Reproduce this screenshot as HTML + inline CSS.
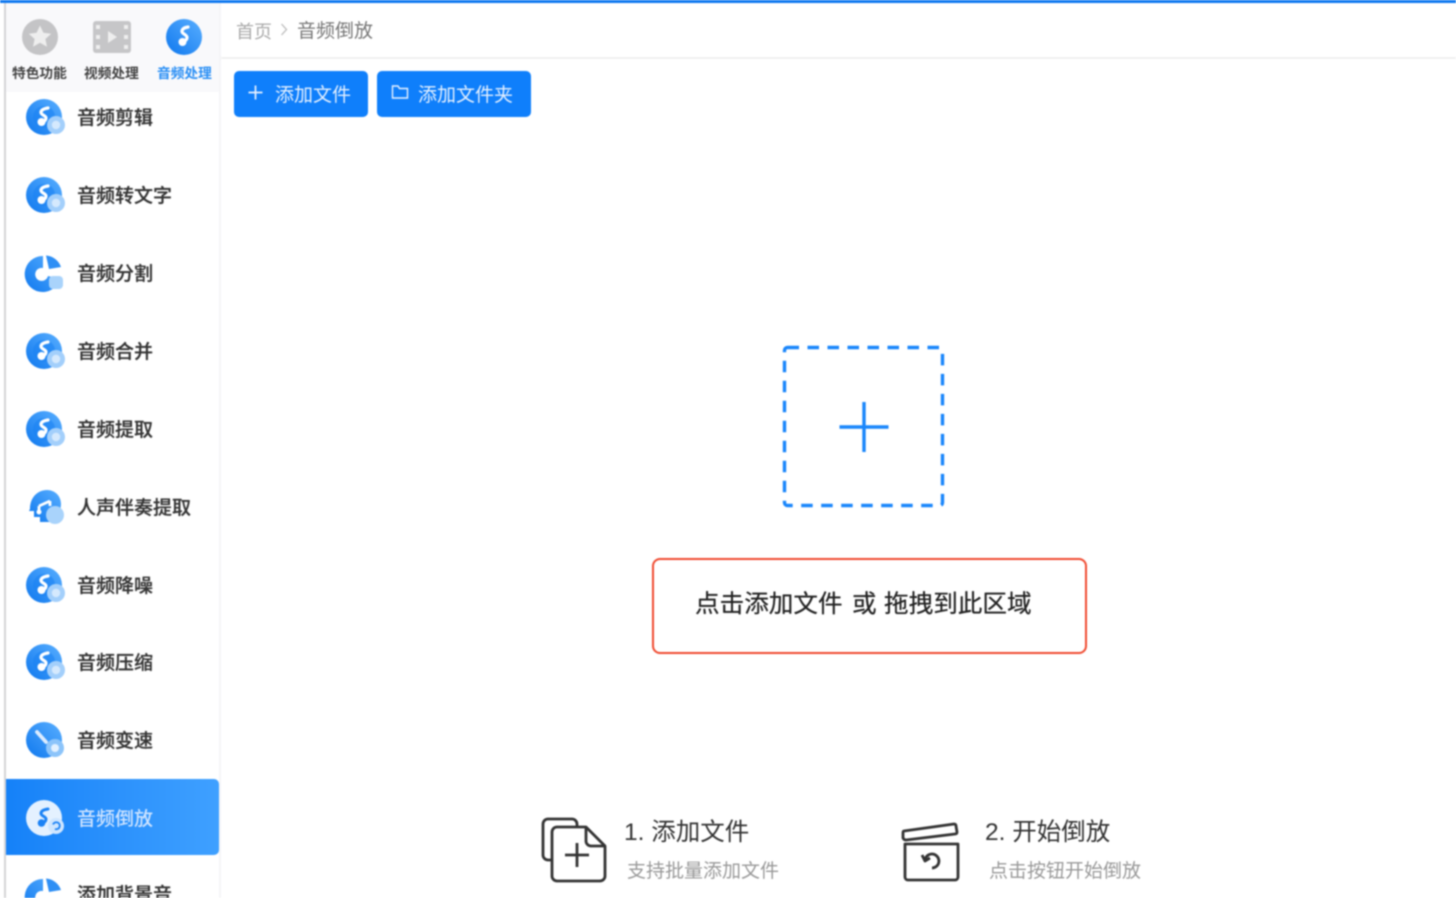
<!DOCTYPE html>
<html lang="zh">
<head>
<meta charset="utf-8">
<title>音频倒放</title>
<style>
html,body{margin:0;padding:0;background:#fff}
body{width:1456px;height:898px;overflow:hidden;position:relative;font-family:"Liberation Sans","Noto Sans CJK SC",sans-serif;color:#333}
#wrap{position:absolute;left:0;top:0;width:1456px;height:898px;overflow:hidden;filter:blur(.75px)}
.a{position:absolute;white-space:nowrap}
.tl{font-size:13.7px;font-weight:700;line-height:16px;top:66px;color:#444}
.it{position:absolute;left:77px;font-size:19px;line-height:24px;color:#333;font-weight:500;white-space:nowrap;text-shadow:0 0 .6px #333}
.ic{position:absolute;left:24px;width:42px;height:42px}
.btn{position:absolute;top:71px;height:46px;background:#0f7ffb;border-radius:5px;color:#e8f2ff}
.rt{top:590px;font-size:24.600px;line-height:30px;color:#222;text-shadow:0 0 .5px #222}
</style>
</head>
<body>
<div id="wrap">
<svg width="0" height="0" style="position:absolute">
<defs>
<linearGradient id="g" x1="0" y1="1" x2="1" y2="0"><stop offset="0" stop-color="#0f78ee"/><stop offset="1" stop-color="#58aeff"/></linearGradient>
<symbol id="note" viewBox="0 0 42 42">
<circle cx="20" cy="20" r="18" fill="url(#g)"/>
<circle cx="20" cy="20" r="11" fill="#1a82f2" opacity=".55"/>
<path d="M24 11c-4 .6-7 2-7 4.500 0 2.500 5 3 5 5.500 0 2-1.500 3.500-3 3.500" fill="none" stroke="#fff" stroke-width="3.200" stroke-linecap="round"/>
<circle cx="17.500" cy="25" r="4" fill="#fff"/>
<circle cx="32" cy="28" r="9" fill="#a3cffb"/>
<circle cx="32" cy="28" r="4.200" fill="#d5e9fd"/>
</symbol>
<symbol id="split" viewBox="0 0 42 42">
<path d="M19 3A18 18 0 1 0 36 26L24 23A6.500 6.500 0 1 1 19 15Z" fill="url(#g)"/>
<path d="M22 2.500A17 17 0 0 1 37 14L25 16Z" fill="#2e8ff5"/>
<rect x="25" y="23" width="14" height="13" rx="4" fill="#a9d3fb"/>
</symbol>
<symbol id="voice" viewBox="0 0 42 42">
<path d="M6 22C6 10 14 3 23 3c8 0 14 6 14 14 0 6-3 11-8 13v5H16v-5H10v-6H5Z" fill="url(#g)"/>
<path d="M15 19l11-5M15 19v5M26 14v5" stroke="#fff" stroke-width="2.800" fill="none"/>
<circle cx="15" cy="25" r="2.500" fill="#fff"/>
<circle cx="31" cy="28" r="9" fill="#a9d3fb"/>
</symbol>
<symbol id="speed" viewBox="0 0 42 42">
<circle cx="20" cy="20" r="18" fill="url(#g)"/>
<path d="M13 12l9 10" stroke="#dcecff" stroke-width="3.800" stroke-linecap="round"/>
<circle cx="31" cy="28" r="9" fill="#8cc4fa"/>
<circle cx="31" cy="28" r="4" fill="#e3f1ff"/>
</symbol>
</defs>
</svg>

<!-- top strip and sidebar -->
<div class="a" style="left:0;top:0;width:1456px;height:3px;background:#0f78f0;z-index:5"></div>
<div class="a" style="left:4px;top:0;width:2px;height:898px;background:#d4d4d6"></div>
<div class="a" style="left:6px;top:3px;width:213px;height:89px;background:#f9f9fb"></div>
<div class="a" style="left:219px;top:3px;width:2px;height:895px;background:#f5f5f7"></div>
<div class="a" style="left:221px;top:57px;width:1235px;height:2px;background:#f1f1f1"></div>

<!-- tabs -->
<svg class="a" style="left:20px;top:17px" width="40" height="40" viewBox="0 0 40 40"><circle cx="20" cy="20" r="18" fill="#c4c4c6"/><path d="M20 8.500l3.400 7.300 7.800.9-5.800 5.300 1.600 7.800-7-4-7 4 1.600-7.800-5.800-5.300 7.800-.9z" fill="#eeeeee"/></svg>
<svg class="a" style="left:92px;top:20px" width="40" height="34" viewBox="0 0 40 34"><rect x="1" y="1" width="38" height="32" rx="3" fill="#c6c6c8"/><path d="M16 11l9 6-9 6z" fill="#eee"/><g fill="#eee"><rect x="4" y="5" width="4" height="4"/><rect x="4" y="15" width="4" height="4"/><rect x="4" y="25" width="4" height="4"/><rect x="32" y="5" width="4" height="4"/><rect x="32" y="15" width="4" height="4"/><rect x="32" y="25" width="4" height="4"/></g></svg>
<svg class="a" style="left:165px;top:18px" width="38" height="38" viewBox="0 0 38 38"><circle cx="19" cy="19" r="18" fill="url(#g)"/><path d="M23 9c-4 .6-6 2-6 4.500 0 2.500 5 3 5 6 0 2-1.500 3.500-3.500 3.500" fill="none" stroke="#fff" stroke-width="3.200" stroke-linecap="round"/><circle cx="17.500" cy="24" r="4" fill="#fff"/></svg>
<div class="a tl" style="left:12px">特色功能</div>
<div class="a tl" style="left:84px">视频处理</div>
<div class="a tl" style="left:157px;color:#2c90f5">音频处理</div>

<!-- active item -->
<div class="a" style="left:6px;top:779px;width:213px;height:76px;border-radius:0 5px 5px 0;background:linear-gradient(90deg,#1581f8,#3fa0ff)"></div>

<!-- sidebar items -->
<svg class="ic" style="top:97px"><use href="#note"/></svg><div class="it" style="top:107px">音频剪辑</div>
<svg class="ic" style="top:175px"><use href="#note"/></svg><div class="it" style="top:185px">音频转文字</div>
<svg class="ic" style="top:253px"><use href="#split"/></svg><div class="it" style="top:263px">音频分割</div>
<svg class="ic" style="top:331px"><use href="#note"/></svg><div class="it" style="top:341px">音频合并</div>
<svg class="ic" style="top:409px"><use href="#note"/></svg><div class="it" style="top:419px">音频提取</div>
<svg class="ic" style="top:487px"><use href="#voice"/></svg><div class="it" style="top:497px">人声伴奏提取</div>
<svg class="ic" style="top:565px"><use href="#note"/></svg><div class="it" style="top:575px">音频降噪</div>
<svg class="ic" style="top:642px"><use href="#note"/></svg><div class="it" style="top:652px">音频压缩</div>
<svg class="ic" style="top:720px"><use href="#speed"/></svg><div class="it" style="top:730px">音频变速</div>
<svg class="ic" style="top:798px" viewBox="0 0 42 42"><circle cx="20" cy="20" r="18" fill="#e4f1ff"/><path d="M24 11c-4 .6-7 2-7 4.500 0 2.500 5 3 5 5.500 0 2-1.500 3.500-3 3.500" fill="none" stroke="#1b82f5" stroke-width="3" stroke-linecap="round"/><circle cx="17.500" cy="25" r="3.800" fill="#1b82f5"/><circle cx="32" cy="28" r="8" fill="#cfe6ff"/><path d="M29 26.500a3.500 3.500 0 1 1 2 4.500" fill="none" stroke="#1b82f5" stroke-width="1.800"/></svg><div class="it" style="top:808px;color:#cfe4ff;text-shadow:none">音频倒放</div>
<svg class="ic" style="top:876px"><use href="#split"/></svg><div class="it" style="top:884px">添加背景音</div>

<!-- breadcrumb -->
<div class="a" style="left:236px;top:21px;font-size:18px;line-height:22px;color:#aaa">首页</div>
<svg class="a" style="left:279px;top:22px" width="10" height="15" viewBox="0 0 10 15"><path d="M2.500 2l5 5.500-5 5.500" fill="none" stroke="#bbb" stroke-width="1.300"/></svg>
<div class="a" style="left:297px;top:21px;font-size:19px;line-height:22px;color:#777">音频倒放</div>

<!-- buttons -->
<div class="btn" style="left:234px;width:134px"></div>
<div class="btn" style="left:377px;width:154px"></div>
<svg class="a" style="left:247px;top:84px" width="17" height="17" viewBox="0 0 17 17"><path d="M8.500 1.500v14M1.500 8.500h14" stroke="#e8f2ff" stroke-width="1.700"/></svg>
<div class="a" style="left:275px;top:84px;font-size:19px;line-height:23px;color:#e4f0ff">添加文件</div>
<svg class="a" style="left:391px;top:84px" width="18" height="16" viewBox="0 0 18 16"><path d="M1.500 14V2h5.500l1.500 2.500h8V14z" fill="none" stroke="#e8f2ff" stroke-width="1.400"/></svg>
<div class="a" style="left:418px;top:84px;font-size:19px;line-height:23px;color:#e4f0ff">添加文件夹</div>

<!-- drop zone -->
<svg class="a" style="left:780px;top:343px" width="167" height="167" viewBox="0 0 167 167">
<rect x="4.500" y="4.500" width="158" height="158" rx="3" fill="none" stroke="#1a86fb" stroke-width="3.400" stroke-dasharray="11.500 8.500"/>
<path d="M84 59v50M59.500 84h49" stroke="#1a86fb" stroke-width="3.400" fill="none"/>
</svg>

<!-- red box -->
<div class="a" style="left:652px;top:558px;width:431px;height:92px;border:2px solid #f04a30;border-radius:8px"></div>
<div class="a rt" style="left:695px">点击添加文件</div>
<div class="a rt" style="left:852px">或</div>
<div class="a rt" style="left:884px">拖拽到此区域</div>

<!-- step 1 -->
<svg class="a" style="left:538px;top:814px" width="72" height="72" viewBox="0 0 72 72" fill="none" stroke="#333" stroke-width="2.800" stroke-linejoin="round">
<path d="M13 46h-3a5 5 0 0 1-5-5V10a5 5 0 0 1 5-5h24a5 5 0 0 1 5 5v3"/>
<path d="M19 13h29l19 19v30a5 5 0 0 1-5 5H19a5 5 0 0 1-5-5V18a5 5 0 0 1 5-5z"/>
<path d="M48 13v14a5 5 0 0 0 5 5h14"/>
<path d="M39 29v24M27 41h24"/>
</svg>
<div class="a" style="left:624px;top:818px;font-size:24.500px;line-height:30px;color:#333">1. 添加文件</div>
<div class="a" style="left:627px;top:860px;font-size:19px;line-height:23px;color:#999">支持批量添加文件</div>

<!-- step 2 -->
<svg class="a" style="left:898px;top:816px" width="66" height="66" viewBox="0 0 66 66" fill="none" stroke="#333" stroke-width="2.800" stroke-linejoin="round">
<path d="M6 15l50-7q2 0 2 2l1 6q0 2-2 2L8 24q-2 0-3-2V17q0-2 1-2z"/>
<path d="M8 28h52v33a3 3 0 0 1-3 3H10a3 3 0 0 1-3-3V28z"/>
<path d="M27 44a7 7 0 1 1 7 8"/>
<path d="M24 39l3 6 5-3"/>
</svg>
<div class="a" style="left:985px;top:818px;font-size:24.500px;line-height:30px;color:#333">2. 开始倒放</div>
<div class="a" style="left:989px;top:860px;font-size:19px;line-height:23px;color:#999">点击按钮开始倒放</div>
</div>
</body>
</html>
